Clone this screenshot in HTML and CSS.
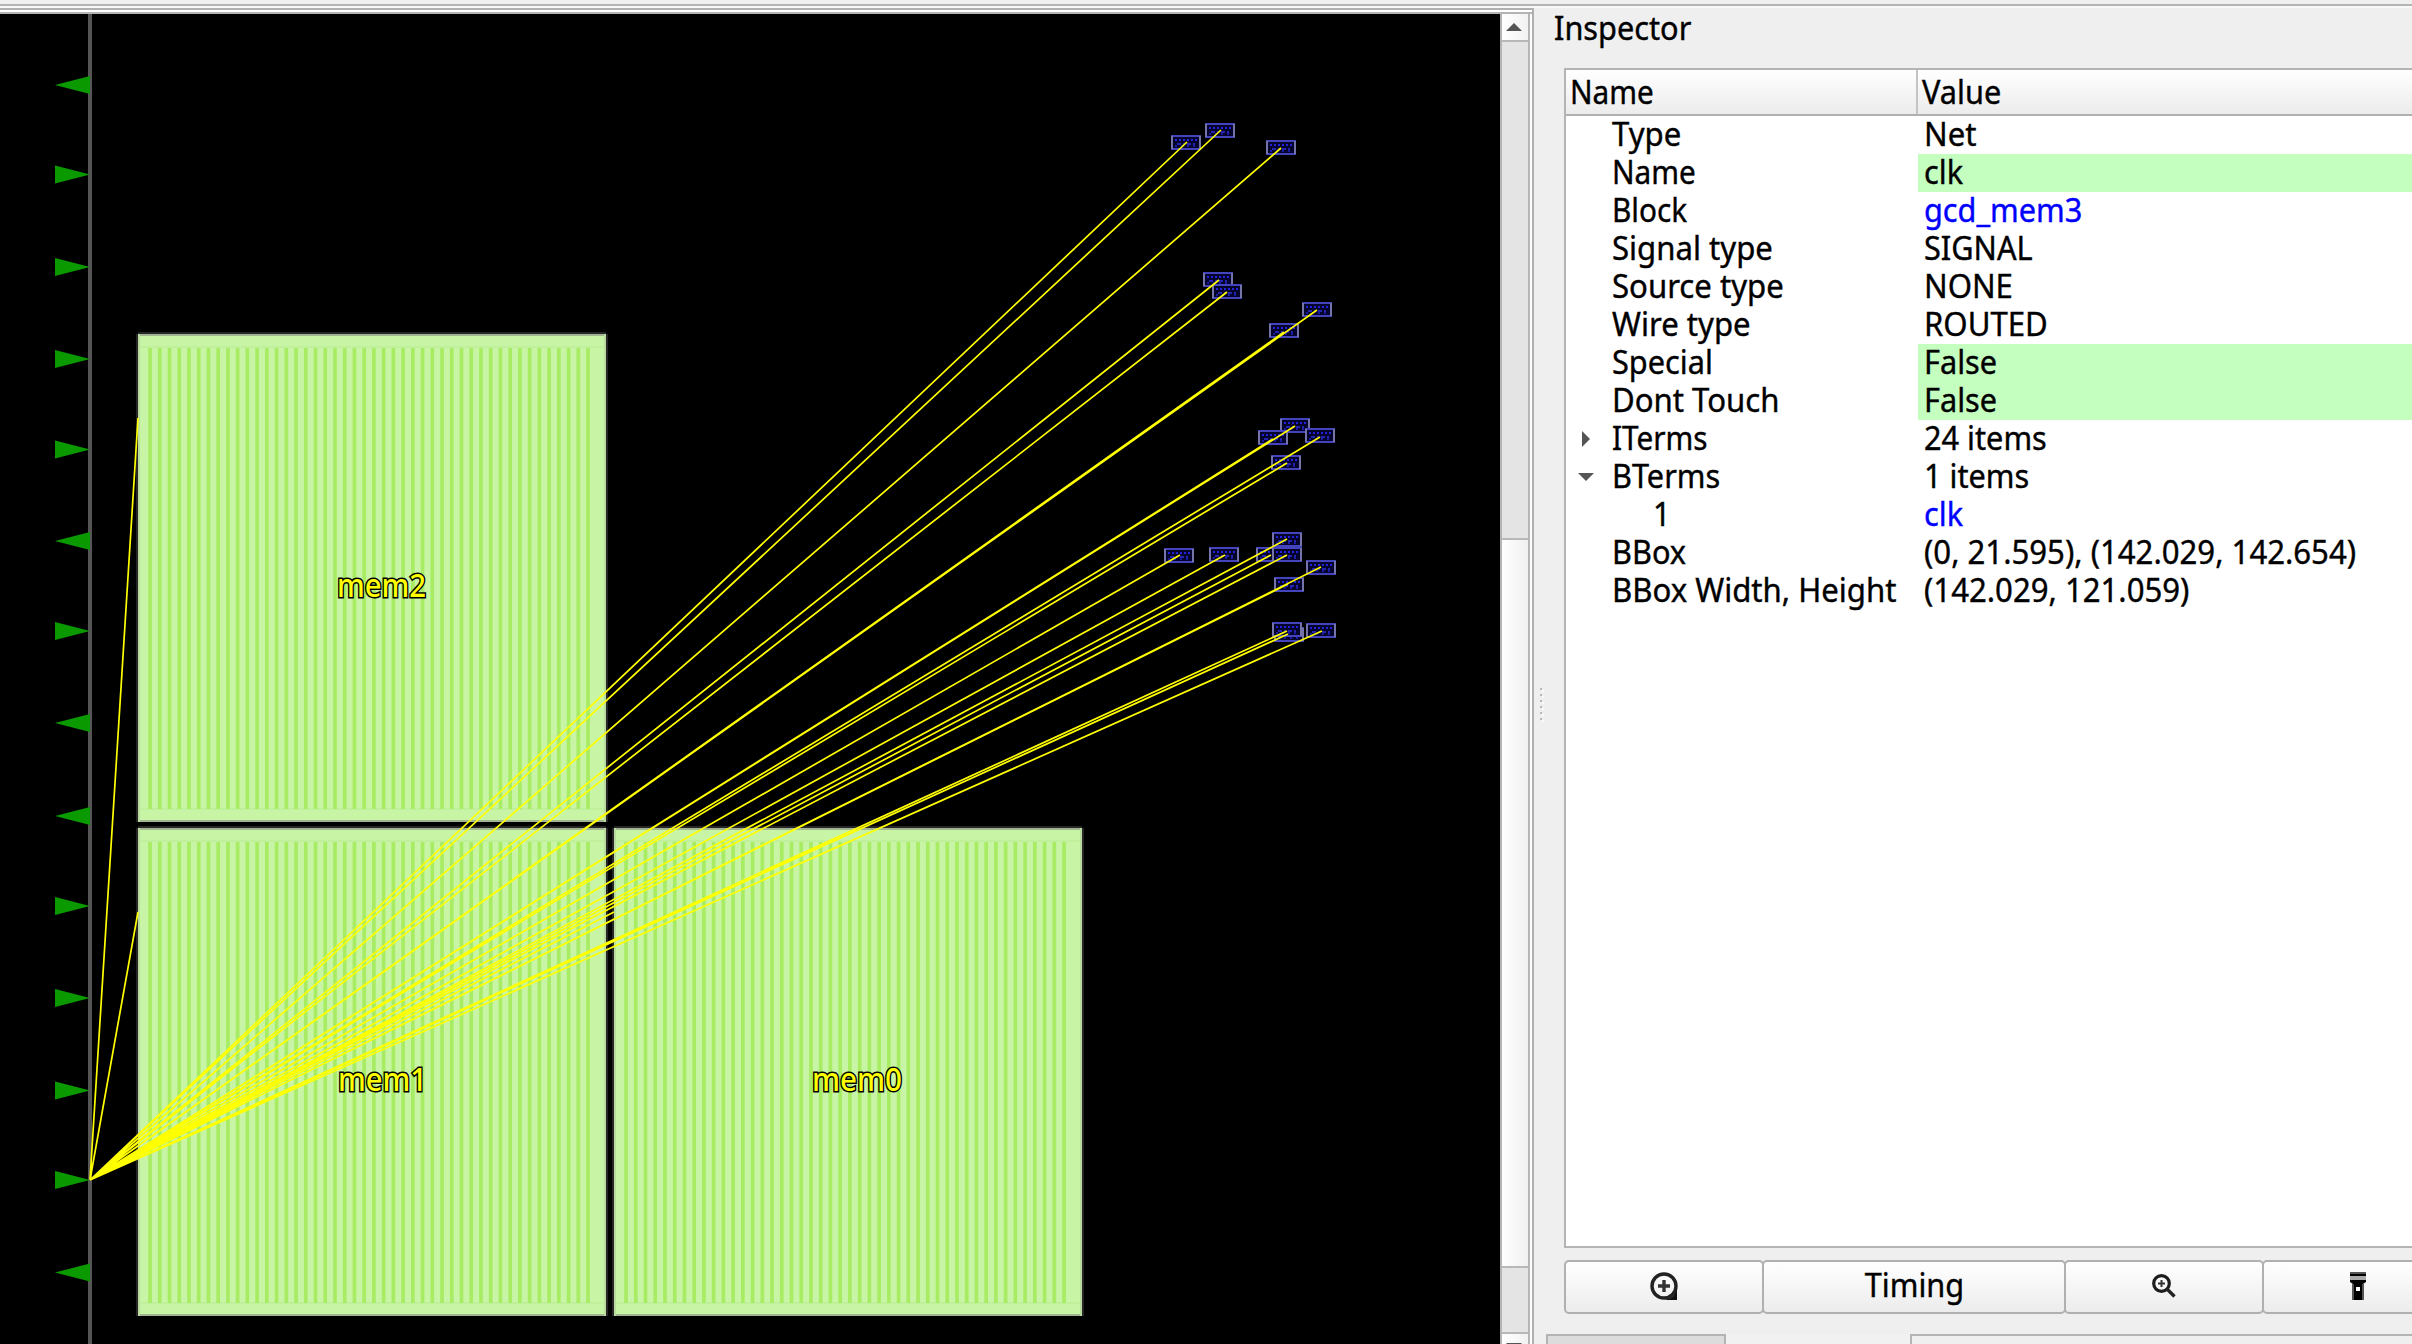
FILE: index.html
```html
<!DOCTYPE html>
<html lang="en">
<head>
<meta charset="utf-8">
<title>Layout viewer</title>
<link rel="stylesheet" href="styles.css">
</head>
<body>
<div class="window">
  <main class="viewer">
    <svg class="layout" width="1500" height="1330" viewBox="0 14 1500 1330">
      <defs>
        <path id="out" d="M55-9V9L90 0Z"/>
        <path id="in" d="M90-9V9L55 0Z"/>
        <g id="macro">
          <path d="M-1 0V488M469 0V488M0-1H468" stroke="#262626" stroke-width="2"/>
          <rect width="468" height="488" fill="#c8f4a6"/>
          <path d="M1 13H467M1 475H467" stroke="#c0f09c" stroke-width="2"/>
          <path class="stripes" d="M10.2 244.5H452.5"/>
          <path d="M0 1H468M0 487H468" stroke="#a3b492" stroke-width="2"/>
          <path d="M1 0V488M467 0V488" stroke="#b9dc9f" stroke-width="2"/>
        </g>
        <g id="cell">
          <rect x="1" y="1" width="28" height="13" fill="#04042c" stroke="#4444bc" stroke-width="2"/>
          <path d="M1 1V14M29 1V14" stroke="#7474a8" stroke-width="2"/>
          <path d="M4 5H26" stroke="#2222dd" stroke-width="2" stroke-dasharray="2 2"/>
          <path d="M6 9H26" stroke="#2424b0" stroke-width="2" stroke-dasharray="4 2 2 2"/>
          <path d="M4 11H26" stroke="#1818a0" stroke-width="2" stroke-dasharray="2 4"/>
        </g>
      </defs>
      <rect y="14" width="1500" height="1330"/>
      <use href="#macro" x="138" y="334"/>
      <use href="#macro" x="138" y="828"/>
      <use href="#macro" x="614" y="828"/>
      <path d="M90 14V1344" stroke="#555" stroke-width="4"/>
      <g fill="#0a9a00">
        <use href="#in" y="85"/><use href="#out" y="174.5"/><use href="#out" y="267"/>
        <use href="#out" y="359"/><use href="#out" y="449.5"/><use href="#in" y="541"/>
        <use href="#out" y="631"/><use href="#in" y="723"/><use href="#in" y="816"/>
        <use href="#out" y="906"/><use href="#out" y="998"/><use href="#out" y="1090.5"/>
        <use href="#out" y="1180"/><use href="#in" y="1272.5"/>
      </g>
      <use href="#cell" x="1171" y="135"/><use href="#cell" x="1205" y="123"/>
      <use href="#cell" x="1266" y="140"/><use href="#cell" x="1203" y="272"/>
      <use href="#cell" x="1212" y="284"/><use href="#cell" x="1302" y="302"/>
      <use href="#cell" x="1269" y="323"/><use href="#cell" x="1280" y="418"/>
      <use href="#cell" x="1258" y="430"/><use href="#cell" x="1305" y="428"/>
      <use href="#cell" x="1271" y="455"/><use href="#cell" x="1272" y="532"/>
      <use href="#cell" x="1164" y="548"/><use href="#cell" x="1209" y="547"/>
      <use href="#cell" x="1256" y="547"/><use href="#cell" x="1272" y="547"/>
      <use href="#cell" x="1306" y="560"/><use href="#cell" x="1274" y="577"/>
      <use href="#cell" x="1274" y="627"/><use href="#cell" x="1272" y="622"/>
      <use href="#cell" x="1306" y="623"/>
      <path class="net" d="M90 1180L1187 142M90 1180L1221 130M90 1180L1281 148M90 1180L1219 280M90 1180L1227 292M90 1180L1317 310M90 1180L1284 332M90 1180L1295 426M90 1180L1273 439M90 1180L1320 437M90 1180L1287 463M90 1180L1287 539M90 1180L1180 555M90 1180L1225 555M90 1180L1271 555M90 1180L1287 555M90 1180L1321 567M90 1180L1288 584M90 1180L1287 631M90 1180L1288 634M90 1180L1322 631M90 1180L614 912M90 1180L138 418M90 1180L138 912"/>
      <g class="labels">
        <text x="337" y="597" textLength="89" lengthAdjust="spacingAndGlyphs">mem2</text>
        <text x="338" y="1091" textLength="89" lengthAdjust="spacingAndGlyphs">mem1</text>
        <text x="812" y="1091" textLength="90" lengthAdjust="spacingAndGlyphs">mem0</text>
      </g>
    </svg>
    <div class="scrollbar">
      <div class="step"><svg width="16" height="8"><path d="M8 0L16 8H0Z" fill="#555"/></svg></div>
      <div class="track"></div>
      <div class="thumb"></div>
      <div class="track low"></div>
      <div class="step"><svg width="16" height="8"><path d="M0 0H16L8 8Z" fill="#555"/></svg></div>
    </div>
  </main>
  <div class="splitter"><i></i><i></i><i></i><i></i><i></i><i></i></div>
  <aside class="inspector">
    <h1><span>Inspector</span></h1>
    <div class="tree">
      <div class="head"><div><span class="tight">Name</span></div><div><span>Value</span></div></div>
      <div class="row"><div><span class="loose">Type</span></div><div><span class="loose">Net</span></div></div>
      <div class="row"><div><span class="tight">Name</span></div><div class="edit"><span>clk</span></div></div>
      <div class="row"><div><span class="tight">Block</span></div><div class="link"><span>gcd_mem3</span></div></div>
      <div class="row"><div><span class="loose">Signal type</span></div><div><span>SIGNAL</span></div></div>
      <div class="row"><div><span class="loose">Source type</span></div><div><span class="loose">NONE</span></div></div>
      <div class="row"><div><span class="loose">Wire type</span></div><div><span class="loose">ROUTED</span></div></div>
      <div class="row"><div><span>Special</span></div><div class="edit"><span>False</span></div></div>
      <div class="row"><div><span class="loose">Dont Touch</span></div><div class="edit"><span>False</span></div></div>
      <div class="row"><div class="branch"><svg width="16" height="16"><path d="M4 0L12 8L4 16Z" fill="#555"/></svg><span class="tight">ITerms</span></div><div><span>24 items</span></div></div>
      <div class="row"><div class="branch"><svg width="16" height="16"><path d="M0 4H16L8 12Z" fill="#555"/></svg><span>BTerms</span></div><div><span>1 items</span></div></div>
      <div class="row"><div class="child"><span>1</span></div><div class="link"><span>clk</span></div></div>
      <div class="row"><div><span>BBox</span></div><div><span class="loose">(0, 21.595), (142.029, 142.654)</span></div></div>
      <div class="row"><div><span class="loose">BBox Width, Height</span></div><div><span class="loose">(142.029, 121.059)</span></div></div>
    </div>
    <div class="actions">
      <button class="narrow"><svg width="28" height="28" viewBox="0 0 28 28"><circle cx="14" cy="14" r="12" fill="none" stroke="#222" stroke-width="3.4"/><path d="M14 8V20M8 14H20" stroke="#333" stroke-width="3.4"/><path d="M27 15V28H15Q26 26 27 15Z" fill="#111"/></svg></button>
      <button class="wide"><span>Timing</span></button>
      <button class="narrow"><svg width="24" height="24" viewBox="0 0 24 24"><circle cx="9.5" cy="9.5" r="7.8" fill="none" stroke="#1c1c1c" stroke-width="3.2"/><path d="M9.500 6V13M6 9.500H13" stroke="#333" stroke-width="2"/><path d="M14.500 14.500L22.500 22.500" stroke="#222" stroke-width="3.4"/></svg></button>
      <button class="narrow torch"><svg width="16" height="28" viewBox="0 0 16 28"><path d="M0 0H16V2H0Z" fill="#555"/><path d="M0 2H16V4H0Z"/><path d="M0 4H16V8H0Z" fill="#aaa"/><path d="M0 8H16V10L13 12V28H3V12L0 10Z" fill="#000"/><path d="M2 12H4V28H2ZM12 12H14V28H12Z" fill="#555"/><path d="M6 15H10V19H6Z" fill="#fff"/></svg></button>
    </div>
    <div class="tabs"><div class="tab"></div><div class="gap"></div><div class="page"></div></div>
  </aside>
</div>
</body>
</html>
```
FILE: styles.css
```css
* { box-sizing: border-box; }
body {
  margin: 0;
  width: 2412px;
  height: 1344px;
  overflow: hidden;
  background: #efefef;
  color: #000;
  font: 33px/38px "Noto Sans", "Open Sans", sans-serif;
}
span { display: inline-block; white-space: nowrap; transform: translateY(-1px) scaleX(.93); transform-origin: 0 50%; -webkit-text-stroke: .4px; }
.tight { transform: translateY(-1px) scaleX(.9); }
.loose { transform: translateY(-1px) scaleX(.943); }
svg { display: block; }
.window { display: flex; height: 1344px; padding-top: 8px; background: linear-gradient(#efefef 4px, #b4b4b4 4px, #b4b4b4 6px, #f8f8f8 6px, #f8f8f8 8px, #efefef 8px); }
.viewer {
  display: flex;
  width: 1534px;
  height: 1336px;
  border-top: 2px solid #b0b0b0;
  border-right: 2px solid #b0b0b0;
  padding: 4px 2px 0 0;
  background: linear-gradient(#fff 2px, #b4b4b4 2px, #b4b4b4 4px, transparent 4px), #fff;
}
.layout { flex: none; overflow: hidden; }
.stripes { stroke: #a8ec64; stroke-width: 461; stroke-dasharray: 3.7 6.033; }
.net { stroke: #ff0; stroke-width: 1.7; fill: none; }
.labels { font: 500 32px "Noto Sans", sans-serif; fill: #ff0; stroke: #000; stroke-width: 3px; paint-order: stroke; }
.scrollbar { display: flex; flex-direction: column; width: 30px; flex: none; border: 2px solid #b4b4b4; border-width: 0 2px; }
.scrollbar > div { flex: none; }
.step { display: flex; align-items: center; justify-content: center; height: 26px; padding-right: 2px; background: linear-gradient(90deg, #fff, #f2f2f2); }
.track { height: 500px; border: 2px solid #b8b8b8; border-width: 2px 0; background: #e4e4e4; }
.thumb { height: 726px; background: linear-gradient(90deg, #fff, #f0f0f0); }
.low { height: 68px; }
.splitter { width: 12px; display: flex; flex-direction: column; align-items: center; gap: 4px; padding: 680px 0 0 2px; }
.splitter i { width: 2px; height: 2px; background: #b8b8b8; box-shadow: 2px 2px #fafafa; }
.inspector { display: flex; flex-direction: column; width: 866px; }
h1 { margin: 0; height: 60px; padding: 2px 0 0 8px; font: inherit; }
.tree { width: 900px; height: 1180px; margin-left: 18px; border: 2px solid #b4b4b4; background: #fff; flex: none; }
.head { display: flex; height: 46px; line-height: 46px; border-bottom: 2px solid #b0b0b0; background: linear-gradient(#fff, #ececec); }
.head div { width: 352px; padding-left: 4px; border-right: 2px solid #c4c4c4; }
.head div + div { flex: 1; }
.row { display: flex; height: 38px; }
.row div { width: 352px; padding-left: 46px; }
.row div + div { flex: 1; padding-left: 6px; }
.row .branch { display: flex; align-items: center; padding-left: 12px; gap: 18px; }
.row .child { padding-left: 87px; }
.edit { background: #c4ffc0; }
.link { color: #00f; }
.actions { display: flex; width: 900px; margin: 12px 0 0 18px; flex: none; }
button { display: flex; align-items: center; justify-content: center; height: 54px; padding: 0 0 2px; border: 2px solid #b0b0b0; border-radius: 5px; background: linear-gradient(#fff, #ececec); font: inherit; color: inherit; margin-right: -2px; flex: none; }
button span { transform-origin: 50% 50%; }
.narrow { width: 200px; }
.torch { padding-right: 8px; }
.wide { width: 304px; }
.tabs { display: flex; height: 10px; margin-top: 20px; flex: none; }
.tab { width: 180px; border: 2px solid #b4b4b4; border-bottom: 0; background: #dcdcdc; }
.gap { width: 184px; background: #f1f1f1; }
.page { flex: 1; border: 2px solid #b4b4b4; border-width: 2px 0 0 2px; }
```
